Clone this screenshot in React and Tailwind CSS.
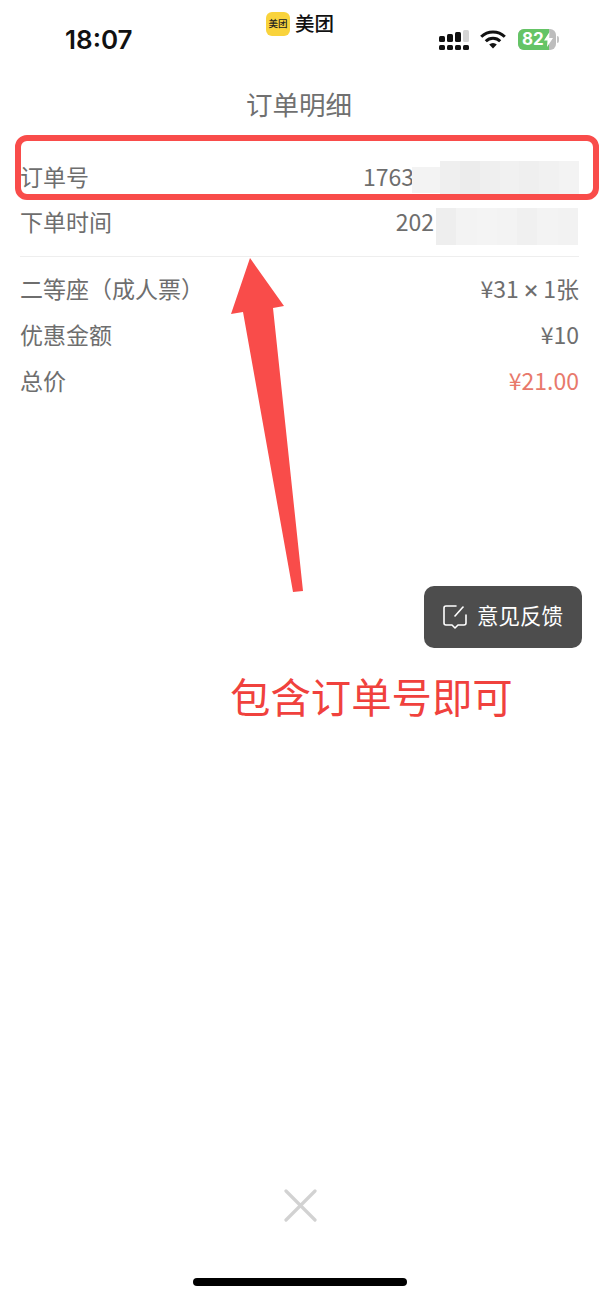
import React from 'react';

const rows = [
  { label: '二等座（成人票）', value: '¥31', times: true, rest: '1张' },
  { label: '优惠金额', value: '¥10' },
  { label: '总价', value: '¥21.00', price: true },
];

const StatusIcons = () => (
  <div className="flex h-[21px] items-center">
    <svg width="30" height="20" viewBox="0 0 30 20">
      <g fill="#111">
        <rect x="0" y="6" width="6" height="6" rx="1.5" />
        <rect x="0" y="15" width="6" height="5" rx="1.5" />
        <rect x="8" y="4" width="6" height="8" rx="1.5" />
        <rect x="8" y="15" width="6" height="5" rx="1.5" />
        <rect x="16" y="2" width="6" height="10" rx="1.5" />
        <rect x="16" y="15" width="6" height="5" rx="1.5" />
        <rect x="24" y="15" width="6" height="5" rx="1.5" />
      </g>
      <rect x="24" y="0" width="6" height="12" rx="1.5" fill="#d4d4d4" />
    </svg>
    <svg width="26" height="19" viewBox="0 0 26 19" className="ml-[11px]">
      <path d="M1.2 6.8a16.8 16.8 0 0 1 23.6 0" fill="none" stroke="#111" strokeWidth="3" />
      <path d="M5.8 11.2a10.2 10.2 0 0 1 14.4 0" fill="none" stroke="#111" strokeWidth="3" />
      <path d="M9.2 14.5a5.4 5.4 0 0 1 7.6 0L13 18.6z" fill="#111" />
    </svg>
    <div className="relative ml-[12px] flex h-[21px] w-[38px] items-center overflow-hidden rounded-[6px] bg-[#bdbdbd]">
      <div className="flex h-full w-[31px] items-center bg-[#65c466] pl-[4px] font-['Inter',sans-serif] text-[17px] font-bold text-white">
        82
      </div>
      <svg width="9" height="15" viewBox="0 0 9 15" className="absolute left-[26px] top-[3px]">
        <path d="M5.5 0 0 8.5h3.5L3 15l6-9H5.2z" fill="#fff" />
      </svg>
    </div>
    <div className="ml-px h-[7px] w-[2px] rounded-r-sm bg-[#c4c4c4]" />
  </div>
);

const Blur = ({ className, cells }) => (
  <div className={`absolute flex ${className}`}>
    {cells.map((c, i) => (
      <div key={i} className="h-full flex-1" style={{ backgroundColor: c }} />
    ))}
  </div>
);

export default function App() {
  return (
    <div className="relative h-[1298px] w-[600px] overflow-hidden bg-white font-['Noto_Sans_CJK_SC','Noto_Sans',sans-serif]">
      {/* status bar */}
      <div className="relative flex h-[75px] items-start justify-between pl-[65px] pr-[41px] pt-[23px]">
        <span className="font-['Inter',sans-serif] text-[26px] font-semibold leading-[34px] text-[#111]">18:07</span>
        <div className="mt-[6px]">
          <StatusIcons />
        </div>
        <div className="absolute left-[266px] top-[12px] flex items-center gap-[5px]">
          <div className="flex h-[24px] w-[24px] items-center justify-center rounded-[6px] bg-[#f9d33c] text-[9.5px] font-medium leading-none text-[#222]">
            美团
          </div>
          <span className="-mt-[2px] text-[19.5px] font-medium leading-[24px] text-[#111]">美团</span>
        </div>
      </div>

      {/* title */}
      <div className="pr-[2px] text-center text-[26.5px] leading-[58px] text-[#707070]">订单明细</div>

      {/* order info */}
      <div className="ml-[20px] mr-[21px] mt-[20px] text-[23px] leading-[46px] text-[#6e6e6e]">
        <div className="flex justify-between">
          <span>订单号</span>
          <span className="mr-[165px]">1763</span>
        </div>
        <div className="-mt-px flex justify-between">
          <span>下单时间</span>
          <span className="mr-[145px]">202</span>
        </div>
        <div className="mt-[12px] border-t border-[#eeeeee] pt-[8px]">
          {rows.map((row) => (
            <div key={row.label} className="flex justify-between">
              <span>{row.label}</span>
              <span className={row.price ? 'text-[#e8796b]' : ''}>
                {row.value}
                {row.times && <span className="mx-[4px] font-['Inter',sans-serif] text-[25px] leading-none">×</span>}
                {row.rest}
              </span>
            </div>
          ))}
        </div>
      </div>

      {/* mosaic over the private numbers */}
      <Blur className="left-[412px] top-[167px] h-[26px] w-[28px]" cells={['#f3f3f3']} />
      <Blur className="left-[440px] top-[161px] h-[33px] w-[139px]" cells={['#efefef', '#ececec', '#efefef', '#f1f1f1', '#efefef', '#f1f1f1', '#f3f3f3']} />
      <Blur className="left-[436px] top-[208px] h-[37px] w-[142px]" cells={['#eeeeee', '#f3f3f3', '#f4f4f4', '#f3f3f3', '#f0f0f0', '#f3f3f3', '#f2f2f2']} />

      {/* red annotations */}
      <div className="absolute left-[15px] top-[135px] h-[65px] w-[584px] rounded-[12px] border-[6px] border-[#f94c4a]" />
      <svg className="absolute left-0 top-0" width="600" height="620" viewBox="0 0 600 620">
        <path d="M250 258 231 314 243 312 293 592 303 591 273 308 284 306z" fill="#f94c4a" />
      </svg>
      <div className="absolute left-[230px] top-[667px] text-[40.4px] leading-[58px] text-[#f0413d]">包含订单号即可</div>

      {/* feedback button */}
      <div className="absolute left-[424px] top-[586px] flex h-[62px] w-[158px] items-center gap-[9px] rounded-[10px] bg-[#4d4d4d] pl-[18px] text-[21.5px] text-white">
        <svg width="26" height="26" viewBox="0 0 26 26" fill="none" stroke="#fff" strokeWidth="1.6" strokeLinecap="round" strokeLinejoin="round">
          <path d="M14 2H4a2 2 0 0 0-2 2v15a2 2 0 0 0 2 2h6l3 3 3-3h6a2 2 0 0 0 2-2v-8" />
          <path d="M13 12 21 3" />
        </svg>
        <span className="-mt-[3px]">意见反馈</span>
      </div>

      {/* close */}
      <svg className="absolute left-[284px] top-[1189px]" width="33" height="33" viewBox="0 0 33 33">
        <path d="M2 2 31 31M31 2 2 31" stroke="#d2d2d2" strokeWidth="3.2" strokeLinecap="round" />
      </svg>

      {/* home indicator */}
      <div className="absolute left-[193px] top-[1278px] h-[8px] w-[214px] rounded-full bg-black" />
    </div>
  );
}
